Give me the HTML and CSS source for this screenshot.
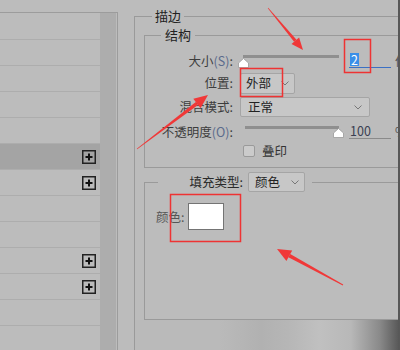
FILE: index.html
```html
<!DOCTYPE html>
<html lang="zh">
<head>
<meta charset="utf-8">
<title>描边</title>
<link rel="stylesheet" href="styles.css">
</head>
<body>
<div class="app">
  <aside class="layers">
    <div class="list">
      <div class="row first"></div>
      <div class="row"></div>
      <div class="row"></div>
      <div class="row"></div>
      <div class="row"></div>
      <div class="row sel"><svg class="plus" width="14" height="14" viewBox="0 0 14 14"><rect x="0.75" y="0.75" width="12.5" height="12.5" fill="none" stroke="#222" stroke-width="1.5"/><path d="M7 3.5v7M3.5 7h7" stroke="#111" stroke-width="2"/></svg></div>
      <div class="row"><svg class="plus" width="14" height="14" viewBox="0 0 14 14"><rect x="0.75" y="0.75" width="12.5" height="12.5" fill="none" stroke="#222" stroke-width="1.5"/><path d="M7 3.5v7M3.5 7h7" stroke="#111" stroke-width="2"/></svg></div>
      <div class="row"></div>
      <div class="row"></div>
      <div class="row"><svg class="plus" width="14" height="14" viewBox="0 0 14 14"><rect x="0.75" y="0.75" width="12.5" height="12.5" fill="none" stroke="#222" stroke-width="1.5"/><path d="M7 3.5v7M3.5 7h7" stroke="#111" stroke-width="2"/></svg></div>
      <div class="row"><svg class="plus" width="14" height="14" viewBox="0 0 14 14"><rect x="0.75" y="0.75" width="12.5" height="12.5" fill="none" stroke="#222" stroke-width="1.5"/><path d="M7 3.5v7M3.5 7h7" stroke="#111" stroke-width="2"/></svg></div>
      <div class="row"></div>
      <div class="row"></div>
    </div>
    <div class="scroll"></div>
  </aside>

  <main class="dialog">
    <fieldset class="outer">
      <legend>描边</legend>
      <fieldset class="inner">
        <legend>结构</legend>
        <div class="form">
          <span class="lbl">大小<span class="key">(S)</span>:</span>
          <div class="ctl">
            <div class="slider">
              <div class="track"></div>
              <svg class="thumb t1" width="11" height="10" viewBox="0 0 11 10"><path d="M5.5 0.5L10.5 5V9.5H0.5V5Z" fill="#fff" stroke="#9a9a9a" stroke-width="0.8"/></svg>
            </div>
            <div class="num active"><span class="hl">2</span></div>
            <span class="unit">像素</span>
          </div>

          <span class="lbl">位置:</span>
          <div class="ctl">
            <div class="dd small"><span>外部</span><svg width="8" height="5" viewBox="0 0 8 5"><path d="M0.5 0.5L4 4L7.5 0.5" fill="none" stroke="#777" stroke-width="1"/></svg></div>
          </div>

          <span class="lbl">混合模式:</span>
          <div class="ctl">
            <div class="dd wide"><span>正常</span><svg width="8" height="5" viewBox="0 0 8 5"><path d="M0.5 0.5L4 4L7.5 0.5" fill="none" stroke="#777" stroke-width="1"/></svg></div>
          </div>

          <span class="lbl">不透明度<span class="key">(O)</span>:</span>
          <div class="ctl">
            <div class="slider">
              <div class="track t2"></div>
              <svg class="thumb tb2" width="11" height="10" viewBox="0 0 11 10"><path d="M5.5 0.5L10.5 5V9.5H0.5V5Z" fill="#fff" stroke="#9a9a9a" stroke-width="0.8"/></svg>
            </div>
            <div class="num"><span class="val">100</span></div>
            <span class="unit">%</span>
          </div>

          <span></span>
          <div class="ctl">
            <span class="chk"></span><span class="chk-label">叠印</span>
          </div>
        </div>
      </fieldset>

      <fieldset class="fill">
        <legend><span class="flbl">填充类型:</span><span class="dd ftype"><span>颜色</span><svg width="8" height="5" viewBox="0 0 8 5"><path d="M0.5 0.5L4 4L7.5 0.5" fill="none" stroke="#777" stroke-width="1"/></svg></span></legend>
        <div class="colorrow">
          <span class="clbl">颜色:</span>
          <span class="swatch"></span>
        </div>
      </fieldset>
      <div class="shade"></div>
    </fieldset>
  </main>

  <svg class="marks" width="400" height="350" viewBox="0 0 400 350">
    <g fill="#f03838">
      <polygon points="267.8,8.2 268.2,7.8 296.5,39.8 294.1,41.8"/>
      <polygon points="303,50 291.5,44 299.1,37.6"/>
      <polygon points="137.2,149.3 136.8,148.7 195.8,102.1 198,104.9"/>
      <polygon points="208,95 200.5,108.3 193.3,98.7"/>
      <polygon points="343.2,284.6 342.8,285.4 288.4,257.3 290.2,254.1"/>
      <polygon points="277,249 292.2,250.4 286.4,261"/>
    </g>
    <g fill="none" stroke="#ee3333" stroke-width="1.5">
      <rect x="344.5" y="39.5" width="26" height="33"/>
      <rect x="240.5" y="68.5" width="42" height="28"/>
      <rect x="170.5" y="194.5" width="70" height="47"/>
    </g>
  </svg>
</div>
</body>
</html>
```

FILE: styles.css
```css
html, body {
  margin: 0;
  padding: 0;
  background: #bcbcbc;
}

body {
  font-family: "Noto Sans CJK SC", "Noto Sans", sans-serif;
  font-size: 12.5px;
  color: #333;
}

.app {
  position: relative;
  width: 400px;
  height: 350px;
  display: flex;
  overflow: hidden;
  background: #bcbcbc;
}

/* ---------- left layer list ---------- */
.layers {
  flex: none;
  box-sizing: border-box;
  width: 118px;
  margin-top: 12px;
  display: flex;
  border-top: 1px solid #9c9c9c;
  border-right: 1px solid #9c9c9c;
  padding-right: 1px;
}

.list {
  width: 100px;
  flex: none;
}

.row {
  height: 25px;
  border-bottom: 1px solid #adadad;
  display: flex;
  align-items: center;
  justify-content: flex-end;
  padding-right: 4px;
}

.row.first {
  height: 26px;
}

.row.sel {
  background: #a4a4a4;
}

.plus {
  display: block;
}

.scroll {
  width: 16px;
  flex: none;
  background: #adadad;
}

/* ---------- dialog ---------- */
.dialog {
  flex: 1;
  min-width: 0;
  padding-left: 16px;
  border-right: 2px solid #585858;
  overflow: hidden;
}

fieldset {
  min-width: 0;
  margin: 0;
  border: 0;
}

.outer {
  margin-top: 8px;
  padding: 3px 0 0 9px;
  border-left: 1px solid #9a9a9a;
  border-top: 1px solid #9a9a9a;
}

.outer > legend {
  margin-left: 8px;
  padding: 0 3px;
  line-height: 16px;
  font-size: 13px;
  color: #222;
}

.inner {
  padding: 7px 0 9px 0;
  border-left: 1px solid #9a9a9a;
  border-top: 1px solid #9a9a9a;
  border-bottom: 1px solid #9a9a9a;
}

.inner > legend {
  margin-left: 16px;
  padding: 0 4px;
  line-height: 16px;
  font-size: 13px;
  color: #222;
}

.form {
  display: grid;
  grid-template-columns: 88px 1fr;
  grid-template-rows: 21px 24px 24px 25px 14px;
  column-gap: 7px;
  align-items: center;
}

.lbl {
  justify-self: end;
  white-space: nowrap;
  color: #3c3c3c;
  line-height: 16px;
}

.key {
  color: #5b6b8c;
}

.ctl {
  display: flex;
  align-items: center;
  white-space: nowrap;
}

.slider {
  position: relative;
  width: 101px;
  height: 14px;
  flex: none;
}

.track {
  margin: 1px 0 0 3px;
  width: 96px;
  height: 3px;
  background: #8f8f8f;
}

.track.t2 {
  margin-left: 5px;
  width: 94px;
}

.thumb {
  position: absolute;
  display: block;
}

.thumb.t1 {
  left: -2px;
  top: 4px;
}

.thumb.tb2 {
  left: 93px;
  top: 3px;
}

.num {
  box-sizing: border-box;
  width: 42px;
  height: 15px;
  margin-left: 8px;
  padding-left: 1px;
  border-bottom: 1px solid #8a8a8a;
  line-height: 14px;
  flex: none;
}

.num.active {
  border-bottom-color: #3b70c4;
}

.hl {
  display: inline-block;
  background: #3b8fe8;
  color: #fff;
  padding: 0 1px;
  line-height: 13px;
}

.val {
  color: #3a3f52;
}

.unit {
  margin-left: 4px;
  color: #555;
}

.dd {
  box-sizing: border-box;
  display: flex;
  align-items: center;
  justify-content: space-between;
  height: 21px;
  padding: 0 5px 0 5px;
  background: #c7c7c7;
  border: 1px solid #a5a5a5;
  border-radius: 2px;
  color: #222;
  line-height: 16px;
}

.dd svg {
  display: block;
}

.dd.small {
  width: 55px;
}

.dd.wide {
  width: 130px;
  height: 20px;
  padding-left: 7px;
  padding-right: 7px;
}

.chk {
  box-sizing: border-box;
  width: 12px;
  height: 12px;
  margin-left: 3px;
  border: 1px solid #9a9a9a;
  border-radius: 2px;
  background: #cbcbcb;
}

.chk-label {
  margin-left: 7px;
  color: #333;
  line-height: 16px;
}

/* ---------- fill group ---------- */
.fill {
  margin-top: 4px;
  padding: 11px 0 89px 11px;
  border-left: 1px solid #9a9a9a;
  border-top: 1px solid #9a9a9a;
  border-bottom: 1px solid #9a9a9a;
}

.fill > legend {
  margin-left: 2px;
  padding: 0 7px 0 0;
  display: flex;
  align-items: center;
  height: 20px;
}

.flbl {
  display: inline-block;
  width: 85px;
  text-align: right;
  color: #2a2a2a;
  line-height: 16px;
}

.dd.ftype {
  width: 57px;
  height: 20px;
  margin-left: 5px;
  padding-left: 6px;
}

.colorrow {
  display: flex;
  align-items: center;
  height: 27px;
}

.clbl {
  color: #555;
  line-height: 16px;
}

.swatch {
  box-sizing: border-box;
  width: 36px;
  height: 27px;
  margin-left: 4px;
  background: #fff;
  border: 1px solid #747474;
}

.shade {
  height: 31px;
  margin-left: -9px;
  background: linear-gradient(to right, #bababa 0%, #bababa 32%, #b1b1b1 48%, #b6b6b6 58%, #c0c0c0 70%, #b8b8b8 82%, #8a8a8a 93%, #5a5a5a 100%);
}

/* ---------- annotations ---------- */
.marks {
  position: absolute;
  left: 0;
  top: 0;
  pointer-events: none;
}
```
